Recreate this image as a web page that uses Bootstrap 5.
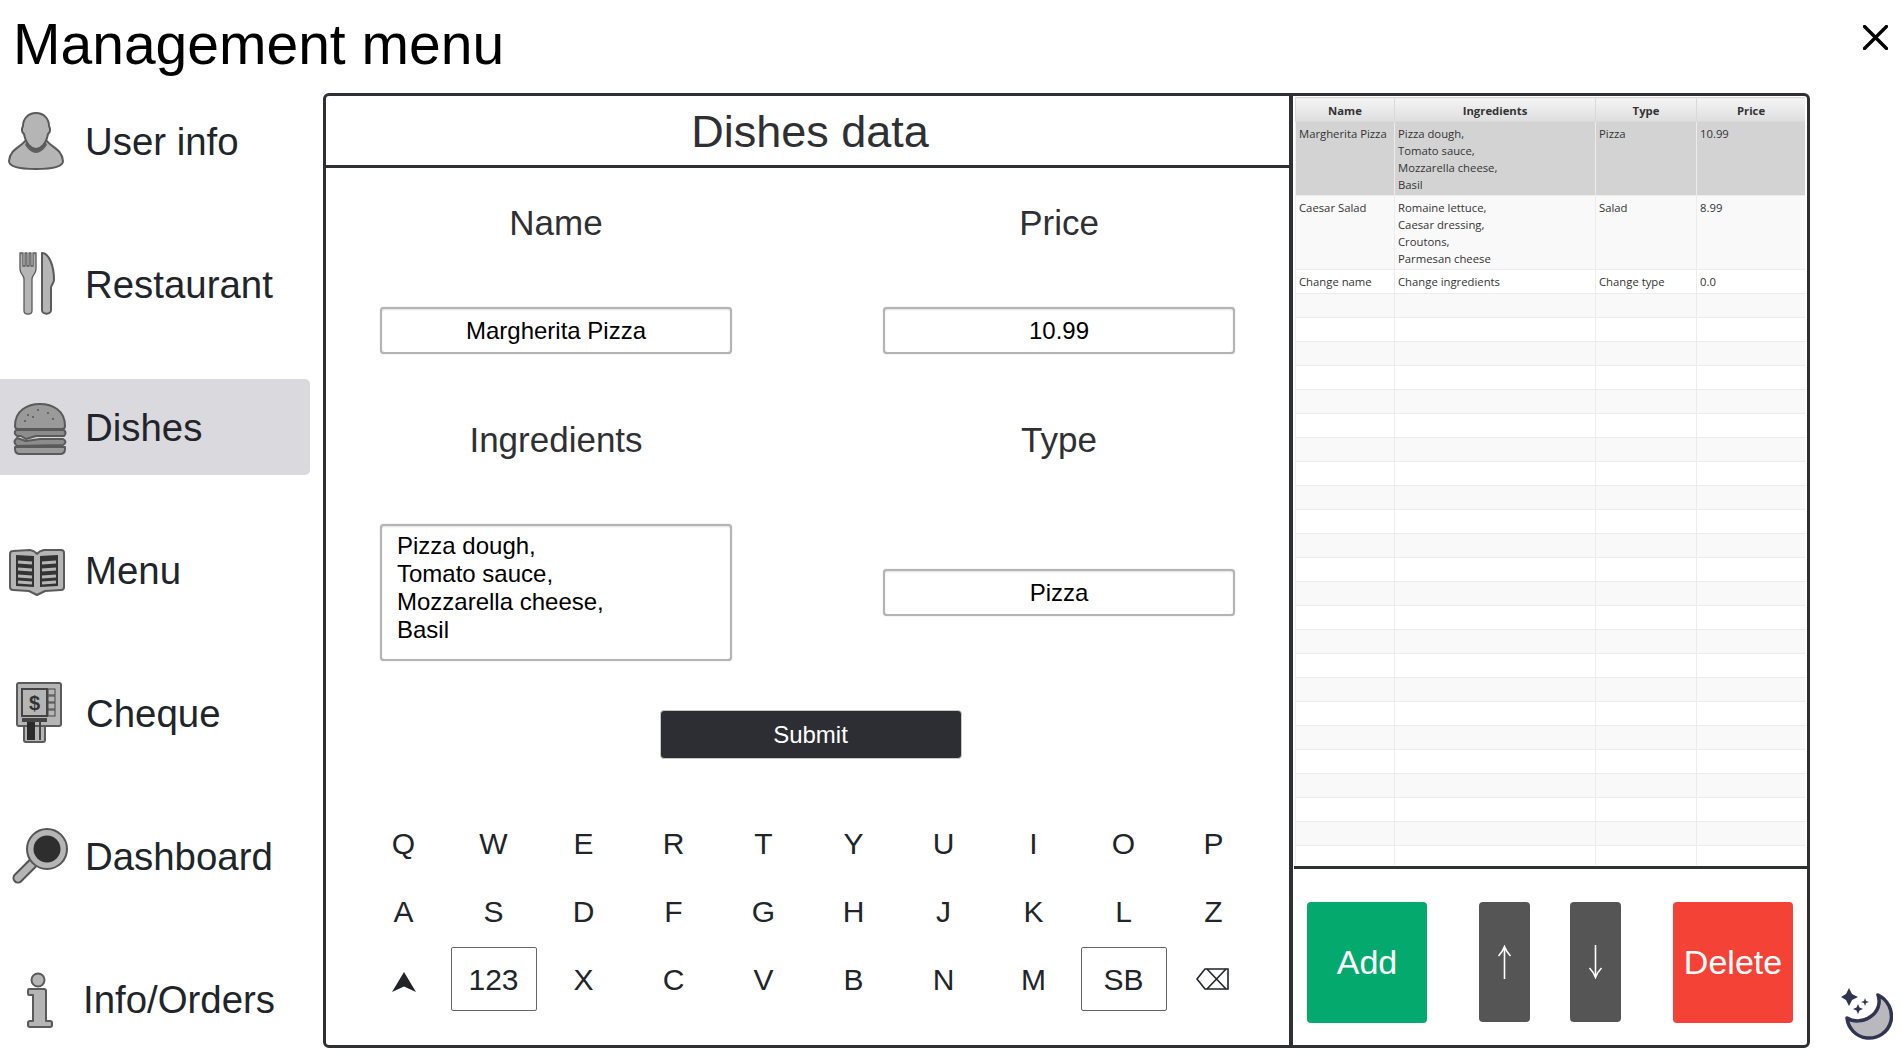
<!DOCTYPE html>
<html lang="en">
<head>
<meta charset="utf-8">
<title>Management menu</title>
<link href="https://cdn.jsdelivr.net/npm/bootstrap@5.3.0/dist/css/bootstrap.min.css" rel="stylesheet">
<style>
html,body{height:100%;overflow:hidden;background:#fff}
body{font-family:"Liberation Sans",Arial,sans-serif;color:#212529}
.page-shell{width:1901px;height:1062px}
.top-bar{height:93px;padding:0 13px 0 13px}
.top-title{font-size:57px;line-height:1;font-weight:400;color:#000;margin:0 0 5px}
.close-x{width:25px;height:25px;margin-bottom:18px;display:block;background:none;border:0;padding:0}
.side-col{width:310px;margin-right:13px}
.side-link{height:96px;padding:0;margin-bottom:47px;color:#212529;font-size:38.4px;border-radius:0 5px 5px 0}
.side-link:last-child{margin-bottom:0}
.side-link:hover,.side-link:focus{color:#212529}
.side-link.is-on{background:#d9d9de}
.side-ic{width:84px;height:96px;flex:none}
.side-txt{padding:2px 0 0 1px}
.shift-l{margin-left:-2px}
.shift-r{margin-left:1px}
.ic{fill:#b5b5b5;stroke:#5a5a5a;stroke-width:2;stroke-linejoin:round}
.ic-thin{stroke-width:1.3}
.ic-dark{fill:#5f5f5f;stroke:none}
.ic-ink{fill:#333;stroke:none}
.main-panel{width:1487px;height:955px;border:3px solid #2f3034;border-radius:6px}
.form-pane{width:963px;flex:none;border-right:4px solid #2f3034;box-sizing:content-box}
.pane-head{height:72px;border-bottom:3px solid #2f3034;font-size:45px;line-height:1;color:#2f3034;margin:0;font-weight:400;padding:2px 0 0 5px}
.field-grid{display:grid;grid-template-columns:352px 352px;column-gap:151px;grid-template-rows:60px 47px 60px 137px;row-gap:55px;justify-content:center;padding-top:24px}
.field-label{font-size:35px;line-height:62px;height:60px;color:#2f3034;text-align:center}
.val-box{height:47px;border:2px solid #b4b4b4;border-radius:4px;font-size:24px;color:#000;box-shadow:0 0 1px rgba(0,0,0,.35),inset 0 1px 2px rgba(0,0,0,.12);padding:0 4px;font-family:inherit}
.val-area{height:137px;line-height:28px;padding:6px 15px;resize:none;overflow:hidden;text-align:left}
.send-btn{width:302px;height:49px;margin:49px 0 0 6px;background:#2d2e33;color:#fff;font-size:24px;border:1px solid #c8c8c8;border-radius:4px;padding:0}
.send-btn:hover{background:#2d2e33;color:#fff}
.key-grid{display:grid;grid-template-columns:repeat(10,90px);grid-auto-rows:64px;row-gap:4px;justify-content:center;margin:52px 0 0 2px}
.key-cap{width:86px;height:64px;padding:0;border:0;border-radius:2px;background:none;font-size:30px;color:#212529;justify-self:center;display:flex;align-items:center;justify-content:center}
.key-cap.framed{border:1px solid #666}
.key-shift svg{margin-top:5px}
.key-back svg{margin-right:3px}
.grid-pane{padding-left:2px}
.grid-wrap{height:768px;margin:1px 0 0 0;overflow:hidden;width:510px;flex:none}
.dish-grid{--bs-table-bg:#fff;--bs-table-border-color:#ececec;--bs-table-color:#333;width:510px;table-layout:fixed;margin:0;font-family:"Open Sans",sans-serif;font-size:11.3px;line-height:17px}
.dish-grid.table>:not(caption)>*>*{padding:0 3px;border:1px solid #ececec;vertical-align:top;height:24px}
.dish-grid.table>thead>tr>th{background:linear-gradient(#f5f5f5,#dedede);text-align:center;font-weight:700;vertical-align:middle;border-color:#d9d9d9;color:#333;padding-top:1px}
.dish-grid.table>tbody>tr>td{padding-top:3px}
.dish-grid tr.alt{--bs-table-bg:#f9f9f9}
.dish-grid tr.picked{--bs-table-bg:#d3d3d3}
.dish-grid tr.tall td{height:74px}
.act-bar{border-top:3px solid #2f3034;margin:1px 0 0 -1px;padding:33px 14px 0 13px;gap:52px}
.act-btn{height:121px;border:0;border-radius:4px;padding:0;color:#fff;font-size:34px;width:120px;display:flex;align-items:center;justify-content:center}
.act-btn:hover{color:#fff}
.act-add{background:#04aa6d}.act-add:hover{background:#04aa6d}
.act-del{background:#f44336}.act-del:hover{background:#f44336}
.act-move{background:#555;width:51px;height:120px}.act-move:hover{background:#555}
.act-pair{gap:40px}
.mode-col{width:91px;padding:0 0 22px 31px}
.mode-ic{width:52px;height:52px;display:block}
</style>
</head>
<body>
<div class="page-shell d-flex flex-column">
  <header class="top-bar d-flex align-items-center justify-content-between">
    <h1 class="top-title">Management menu</h1>
    <button class="close-x" type="button" aria-label="Close"><svg width="25" height="25" viewBox="0 0 25 25"><path d="M1.5 1.5 23.5 23.5M23.5 1.5 1.5 23.5" stroke="#000" stroke-width="3.4" stroke-linecap="round"/></svg></button>
  </header>
  <div class="d-flex flex-grow-1">
    <nav class="nav flex-column side-col flex-nowrap">
      <a class="nav-link side-link d-flex align-items-center" href="#">
        <svg class="side-ic" viewBox="0 0 84 96"><path class="ic" d="M25 48C21 54 10 56 9 68C9 74 22 76 36 76C50 76 63 74 63 68C62 56 51 54 47 48Z"/><path class="ic-dark" d="M27 47Q36 62 45 47L47 52Q36 68 25 52Z"/><path class="ic" d="M36 20C44 20 49 26 49 33C51 36 50 40 48 41C46 51 41 56 36 56C31 56 26 51 24 41C22 40 21 36 23 33C23 26 28 20 36 20Z"/></svg>
        <span class="side-txt">User info</span></a>
      <a class="nav-link side-link d-flex align-items-center" href="#">
        <svg class="side-ic" viewBox="0 0 84 96"><path class="ic ic-thin" d="M20 17H23V30H25V17H27V30H29V17H31V30H33V17H36V33C36 38 32 39 32 43V75C32 79 24 79 24 75V43C24 39 20 38 20 33Z"/><path class="ic" d="M42 17C49 17 54 30 54 44C54 47 51 49 51 52V74C51 79 42 79 42 74Z"/></svg>
        <span class="side-txt">Restaurant</span></a>
      <a class="nav-link side-link is-on d-flex align-items-center" href="#">
        <svg class="side-ic" viewBox="0 0 84 96"><path class="ic" style="fill:#9a9a9a" d="M15 47C15 31 28 25 40 25C52 25 65 31 65 47Q65 50 62 50H18Q15 50 15 47Z"/><path class="ic" style="fill:#8c8c8c" d="M16 51H64Q67 54 64 57H36L26 60L21 57H17Q13 54 16 51Z"/><path class="ic" style="fill:#8c8c8c" d="M17 59L26 62L40 60H63Q68 63 63 66L17 67Q12 63 17 59Z"/><path class="ic" style="fill:#9a9a9a" d="M15 68H65V70Q65 75 60 75H20Q15 75 15 70Z"/><g fill="#555"><circle cx="28" cy="36" r="1"/><circle cx="38" cy="31" r="1"/><circle cx="48" cy="34" r="1"/><circle cx="33" cy="38" r="1"/><circle cx="53" cy="40" r="1"/><circle cx="25" cy="42" r="1"/></g></svg>
        <span class="side-txt">Dishes</span></a>
      <a class="nav-link side-link d-flex align-items-center" href="#">
        <svg class="side-ic" viewBox="0 0 84 96"><path class="ic" d="M10 32Q10 29 13 29L30 28Q35 29 37 32Q39 29 44 28L61 28Q64 28 64 31V65Q64 68 61 68L45 69L37 73L29 69L13 68Q10 68 10 65Z"/><path class="ic-ink" d="M16 33L34 34V65L16 64ZM40 34L58 33V64L40 65Z"/><path stroke="#b5b5b5" stroke-width="3" fill="none" d="M18 40L32 41M18 47L32 48M18 54L32 55M18 60L32 61M42 41L56 40M42 48L56 47M42 55L56 54M42 61L56 60"/></svg>
        <span class="side-txt">Menu</span></a>
      <a class="nav-link side-link d-flex align-items-center" href="#">
        <svg class="side-ic" viewBox="0 0 84 96"><rect class="ic" x="24" y="54" width="21" height="23" rx="2"/><rect class="ic" x="17" y="18" width="44" height="43" rx="2"/><rect x="22" y="24" width="25" height="27" fill="#b5b5b5" stroke="#444" stroke-width="2"/><rect x="48" y="24" width="7" height="6" fill="#b5b5b5" stroke="#444"/><rect x="48" y="31" width="7" height="6" fill="#b5b5b5" stroke="#444"/><rect x="48" y="38" width="7" height="6" fill="#b5b5b5" stroke="#444"/><rect x="48" y="45" width="7" height="6" fill="#b5b5b5" stroke="#444"/><text x="34.5" y="45" text-anchor="middle" font-size="20" font-weight="700" fill="#333" font-family="Liberation Sans">$</text><rect x="22" y="53" width="25" height="4" fill="#444"/><rect x="27" y="57" width="8" height="18" fill="#2b2b2b"/><path d="M40 57V75" stroke="#444" stroke-width="2"/></svg>
        <span class="side-txt shift-r">Cheque</span></a>
      <a class="nav-link side-link d-flex align-items-center" href="#">
        <svg class="side-ic" viewBox="0 0 84 96"><path d="M33 55 18 70" stroke="#555" stroke-width="11" stroke-linecap="round"/><path d="M33 55 18 70" stroke="#b5b5b5" stroke-width="7" stroke-linecap="round"/><circle cx="47" cy="41" r="20" fill="#b5b5b5" stroke="#555" stroke-width="2"/><circle cx="47" cy="41" r="13.5" fill="#2e2e2e"/></svg>
        <span class="side-txt">Dashboard</span></a>
      <a class="nav-link side-link d-flex align-items-center" href="#">
        <svg class="side-ic" viewBox="0 0 84 96"><circle class="ic" cx="38" cy="29" r="6.5"/><path class="ic" d="M29 38H44Q46 38 46 40V70H50Q52 70 52 72V74Q52 76 50 76H30Q28 76 28 74V72Q28 70 30 70H33V44H29Q28 44 28 42V40Q28 38 29 38Z"/></svg>
        <span class="side-txt shift-l">Info/Orders</span></a>
    </nav>
    <main class="main-panel d-flex">
      <section class="form-pane d-flex flex-column">
        <h2 class="pane-head d-flex align-items-center justify-content-center">Dishes data</h2>
        <div class="field-grid">
          <div class="field-label">Name</div>
          <div class="field-label">Price</div>
          <input class="form-control val-box text-center" type="text" value="Margherita Pizza" aria-label="Name">
          <input class="form-control val-box text-center" type="text" value="10.99" aria-label="Price">
          <div class="field-label">Ingredients</div>
          <div class="field-label">Type</div>
          <textarea class="form-control val-box val-area" aria-label="Ingredients">Pizza dough,
Tomato sauce,
Mozzarella cheese,
Basil</textarea>
          <div class="d-flex align-items-center"><input class="form-control val-box text-center" type="text" value="Pizza" aria-label="Type"></div>
        </div>
        <div class="d-flex justify-content-center"><button class="btn send-btn" type="button">Submit</button></div>
        <div class="key-grid">
          <button class="btn key-cap" type="button">Q</button><button class="btn key-cap" type="button">W</button><button class="btn key-cap" type="button">E</button><button class="btn key-cap" type="button">R</button><button class="btn key-cap" type="button">T</button><button class="btn key-cap" type="button">Y</button><button class="btn key-cap" type="button">U</button><button class="btn key-cap" type="button">I</button><button class="btn key-cap" type="button">O</button><button class="btn key-cap" type="button">P</button>
          <button class="btn key-cap" type="button">A</button><button class="btn key-cap" type="button">S</button><button class="btn key-cap" type="button">D</button><button class="btn key-cap" type="button">F</button><button class="btn key-cap" type="button">G</button><button class="btn key-cap" type="button">H</button><button class="btn key-cap" type="button">J</button><button class="btn key-cap" type="button">K</button><button class="btn key-cap" type="button">L</button><button class="btn key-cap" type="button">Z</button>
          <button class="btn key-cap key-shift" type="button" aria-label="Shift"><svg width="24" height="20" viewBox="0 0 24 20"><path d="M12 0 24 20 12 14.5 0 20Z" fill="#212529"/></svg></button><button class="btn key-cap framed" type="button">123</button><button class="btn key-cap" type="button">X</button><button class="btn key-cap" type="button">C</button><button class="btn key-cap" type="button">V</button><button class="btn key-cap" type="button">B</button><button class="btn key-cap" type="button">N</button><button class="btn key-cap" type="button">M</button><button class="btn key-cap framed" type="button">SB</button><button class="btn key-cap key-back" type="button" aria-label="Backspace"><svg width="33" height="22" viewBox="0 0 33 22" fill="none" stroke="#212529" stroke-width="1.6"><path d="M1 11 9 1H32V21H9Z"/><path d="M11 1 30 21M30 1 11 21"/></svg></button>
        </div>
      </section>
      <section class="grid-pane d-flex flex-column flex-grow-1">
        <div class="grid-wrap">
          <table class="table dish-grid">
            <colgroup><col style="width:99px"><col style="width:201px"><col style="width:101px"><col style="width:109px"></colgroup>
            <thead><tr><th>Name</th><th>Ingredients</th><th>Type</th><th>Price</th></tr></thead>
            <tbody>
              <tr class="picked tall"><td>Margherita Pizza</td><td>Pizza dough,<br>Tomato sauce,<br>Mozzarella cheese,<br>Basil</td><td>Pizza</td><td>10.99</td></tr>
              <tr class="alt tall"><td>Caesar Salad</td><td>Romaine lettuce,<br>Caesar dressing,<br>Croutons,<br>Parmesan cheese</td><td>Salad</td><td>8.99</td></tr>
              <tr><td>Change name</td><td>Change ingredients</td><td>Change type</td><td>0.0</td></tr>
              <tr class="alt"><td></td><td></td><td></td><td></td></tr><tr><td></td><td></td><td></td><td></td></tr>
              <tr class="alt"><td></td><td></td><td></td><td></td></tr><tr><td></td><td></td><td></td><td></td></tr>
              <tr class="alt"><td></td><td></td><td></td><td></td></tr><tr><td></td><td></td><td></td><td></td></tr>
              <tr class="alt"><td></td><td></td><td></td><td></td></tr><tr><td></td><td></td><td></td><td></td></tr>
              <tr class="alt"><td></td><td></td><td></td><td></td></tr><tr><td></td><td></td><td></td><td></td></tr>
              <tr class="alt"><td></td><td></td><td></td><td></td></tr><tr><td></td><td></td><td></td><td></td></tr>
              <tr class="alt"><td></td><td></td><td></td><td></td></tr><tr><td></td><td></td><td></td><td></td></tr>
              <tr class="alt"><td></td><td></td><td></td><td></td></tr><tr><td></td><td></td><td></td><td></td></tr>
              <tr class="alt"><td></td><td></td><td></td><td></td></tr><tr><td></td><td></td><td></td><td></td></tr>
              <tr class="alt"><td></td><td></td><td></td><td></td></tr><tr><td></td><td></td><td></td><td></td></tr>
              <tr class="alt"><td></td><td></td><td></td><td></td></tr><tr><td></td><td></td><td></td><td></td></tr>
              <tr class="alt"><td></td><td></td><td></td><td></td></tr><tr><td></td><td></td><td></td><td></td></tr>
            </tbody>
          </table>
        </div>
        <div class="act-bar d-flex">
          <button class="btn act-btn act-add" type="button">Add</button>
          <div class="act-pair d-flex">
            <button class="btn act-btn act-move" type="button" aria-label="Move up"><svg width="15" height="34" viewBox="0 0 15 34" fill="none" stroke="#fff" stroke-width="1.6"><path d="M7.500 34V2M1.500 11Q5.500 7 7.500 1.500Q9.500 7 13.500 11"/></svg></button>
            <button class="btn act-btn act-move" type="button" aria-label="Move down"><svg width="15" height="34" viewBox="0 0 15 34" fill="none" stroke="#fff" stroke-width="1.6"><path d="M7.500 0V32M1.500 23Q5.500 27 7.500 32.500Q9.500 27 13.500 23"/></svg></button>
          </div>
          <button class="btn act-btn act-del" type="button">Delete</button>
        </div>
      </section>
    </main>
    <aside class="mode-col d-flex align-items-end">
      <svg class="mode-ic" viewBox="0 0 52 52"><path d="M37 7C47 12 52 22 50 33C47 45 36 51 26 50C15 49 7 40 6 30C12 34 22 34 29 29C37 24 40 15 37 7Z" fill="#b8b8bd" stroke="#2f3450" stroke-width="3.5" stroke-linejoin="round"/><path fill="#2f3450" d="M8 0 11 6 17 9 11 12 8 18 5 12 0 9 5 6ZM24 10 25 13 28 14 25 15 24 18 23 15 20 14 23 13ZM17 16 18.500 19.500 22 21 18.500 22.500 17 26 15.500 22.500 12 21 15.500 19.500Z"/></svg>
    </aside>
  </div>
</div>
<script src="https://cdn.jsdelivr.net/npm/bootstrap@5.3.0/dist/js/bootstrap.bundle.min.js"></script>
</body>
</html>
